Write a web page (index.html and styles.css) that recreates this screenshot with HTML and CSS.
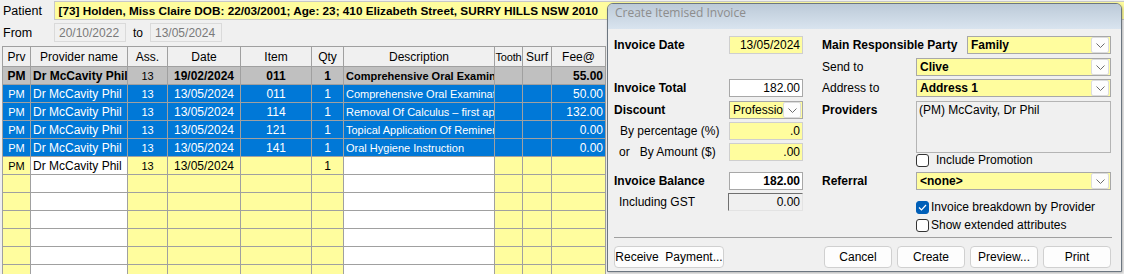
FILE: index.html
```html
<!DOCTYPE html>
<html>
<head>
  <link rel="stylesheet" href="styles.css">
</head>

<body>
  <div class="main">
    <div class="patient-row">
      <span class="lbl">Patient</span>
      <div class="patient-box">[73] Holden, Miss Claire DOB: 22/03/2001; Age: 23; 410 Elizabeth Street, SURRY HILLS NSW 2010</div>
    </div>
    <div class="from-row">
      <span class="lbl">From</span>
      <div class="date-box">20/10/2022</div>
      <span class="to">to</span>
      <div class="date-box">13/05/2024</div>
    </div>

    <!-- Item grid -->
    <table class="grid">
      <colgroup>
        <col style="width:28px"><col style="width:97px"><col style="width:40px"><col style="width:73px"><col style="width:71px">
        <col style="width:32px"><col style="width:151px"><col style="width:28px"><col style="width:29px"><col style="width:54px">
      </colgroup>
      <tr class="head">
        <th>Prv</th><th>Provider name</th><th>Ass.</th><th>Date</th><th>Item</th><th>Qty</th><th>Description</th><th class="tight">Tooth</th><th>Surf</th><th>Fee@</th>
      </tr>
      <tr class="sum">
        <td class="c">PM</td><td>Dr McCavity Phil</td><td class="c sm">13</td><td class="c">19/02/2024</td><td class="c">011</td>
        <td class="c">1</td><td class="sm">Comprehensive Oral Examination</td><td></td><td></td><td class="r">55.00</td>
      </tr>
      <tr class="sel">
        <td class="c sm">PM</td><td>Dr McCavity Phil</td><td class="c sm">13</td><td class="c">13/05/2024</td><td class="c">011</td>
        <td class="c">1</td><td class="sm">Comprehensive Oral Examination</td><td></td><td></td><td class="r">50.00</td>
      </tr>
      <tr class="sel">
        <td class="c sm">PM</td><td>Dr McCavity Phil</td><td class="c sm">13</td><td class="c">13/05/2024</td><td class="c">114</td>
        <td class="c">1</td><td class="sm">Removal Of Calculus – first appointment</td><td></td><td></td><td class="r">132.00</td>
      </tr>
      <tr class="sel">
        <td class="c sm">PM</td><td>Dr McCavity Phil</td><td class="c sm">13</td><td class="c">13/05/2024</td><td class="c">121</td>
        <td class="c">1</td><td class="sm">Topical Application Of Remineralising Agent</td><td></td><td></td><td class="r">0.00</td>
      </tr>
      <tr class="sel">
        <td class="c sm">PM</td><td>Dr McCavity Phil</td><td class="c sm">13</td><td class="c">13/05/2024</td><td class="c">141</td>
        <td class="c">1</td><td class="sm">Oral Hygiene Instruction</td><td></td><td></td><td class="r">0.00</td>
      </tr>
      <tr class="blank">
        <td class="c sm">PM</td><td class="w">Dr McCavity Phil</td><td class="c sm">13</td><td class="c">13/05/2024</td><td></td>
        <td class="c">1</td><td class="w"></td><td></td><td></td><td></td>
      </tr>
      <tr class="blank"><td></td><td class="w"></td><td></td><td></td><td></td><td></td><td class="w"></td><td></td><td></td><td></td></tr>
      <tr class="blank"><td></td><td class="w"></td><td></td><td></td><td></td><td></td><td class="w"></td><td></td><td></td><td></td></tr>
      <tr class="blank"><td></td><td class="w"></td><td></td><td></td><td></td><td></td><td class="w"></td><td></td><td></td><td></td></tr>
      <tr class="blank"><td></td><td class="w"></td><td></td><td></td><td></td><td></td><td class="w"></td><td></td><td></td><td></td></tr>
      <tr class="blank"><td></td><td class="w"></td><td></td><td></td><td></td><td></td><td class="w"></td><td></td><td></td><td></td></tr>
      <tr class="blank"><td></td><td class="w"></td><td></td><td></td><td></td><td></td><td class="w"></td><td></td><td></td><td></td></tr>
    </table>
  </div>

  <!-- Create Itemised Invoice window, floating over the grid -->
  <div class="dialog">
    <div class="title">Create Itemised Invoice</div>
    <div class="dlg-body">
      <div class="form">
        <div class="col-left">
          <span class="b">Invoice Date</span>
          <div class="field yel">13/05/2024</div>
          <span></span><span></span>
          <span class="b">Invoice Total</span>
          <div class="field">182.00</div>
          <span class="b">Discount</span>
          <div class="combo"><span>Professio</span><i class="drop"><svg width="9" height="5" viewBox="0 0 9 5"><polyline points="0.5,0.5 4.5,4.5 8.5,0.5" fill="none" stroke="#6d6d6d"/></svg></i></div>
          <span class="ind">By percentage (%)</span>
          <div class="field yel">.0</div>
          <span class="ind2">or&nbsp;&nbsp; By Amount ($)</span>
          <div class="field yel">.00</div>
          <span class="b">Invoice Balance</span>
          <div class="field b">182.00</div>
          <span class="ind2">Including GST</span>
          <div class="field sunk">0.00</div>
        </div>

        <div class="col-right">
          <div class="span-row">
            <span class="b">Main Responsible Party</span>
            <div class="combo mrp"><span class="b">Family</span><i class="drop"><svg width="9" height="5" viewBox="0 0 9 5"><polyline points="0.5,0.5 4.5,4.5 8.5,0.5" fill="none" stroke="#6d6d6d"/></svg></i></div>
          </div>
          <span>Send to</span>
          <div class="combo"><span class="b">Clive</span><i class="drop"><svg width="9" height="5" viewBox="0 0 9 5"><polyline points="0.5,0.5 4.5,4.5 8.5,0.5" fill="none" stroke="#6d6d6d"/></svg></i></div>
          <span>Address to</span>
          <div class="combo"><span class="b">Address 1</span><i class="drop"><svg width="9" height="5" viewBox="0 0 9 5"><polyline points="0.5,0.5 4.5,4.5 8.5,0.5" fill="none" stroke="#6d6d6d"/></svg></i></div>
          <span class="b">Providers</span>
          <div class="listbox">(PM) McCavity, Dr Phil</div>
          <span></span>
          <label class="check promo"><i class="box"></i>Include Promotion</label>
          <span class="b">Referral</span>
          <div class="combo"><span class="b">&lt;none&gt;</span><i class="drop"><svg width="9" height="5" viewBox="0 0 9 5"><polyline points="0.5,0.5 4.5,4.5 8.5,0.5" fill="none" stroke="#6d6d6d"/></svg></i></div>
          <span></span>
          <label class="check"><i class="box on"><svg width="9" height="7" viewBox="0 0 9 7"><polyline points="1,3.5 3.5,6 8,1" fill="none" stroke="#fff" stroke-width="1.2"/></svg></i>Invoice breakdown by Provider</label>
          <span></span>
          <label class="check"><i class="box"></i>Show extended attributes</label>
        </div>
      </div>

      <div class="sep"></div>

      <div class="buttons">
        <button class="btn wide">Receive&nbsp; Payment...</button>
        <span class="spacer"></span>
        <button class="btn">Cancel</button>
        <button class="btn">Create</button>
        <button class="btn">Preview...</button>
        <button class="btn">Print</button>
      </div>
    </div>
  </div>
</body>
</html>
```

FILE: styles.css
```css
body {
  margin: 0;
  width: 1124px;
  height: 274px;
  overflow: hidden;
  background-color: #f0f0f0;
  font: 12px "Liberation Sans", Arial, sans-serif;
  color: #000;
}

/* Main window */
.main {
  padding: 1px 0 0 2px;
}

.patient-row, .from-row {
  display: flex;
  align-items: center;
}

.patient-row {
  height: 19px;
}

.from-row {
  height: 19px;
  margin-top: 3px;
}

.lbl {
  width: 51px;
  margin-left: 1px;
  font-size: 12.5px;
}

.patient-box {
  box-sizing: border-box;
  height: 19px;
  width: 1080px;
  padding: 2px 4px;
  background-color: #fffd9e;
  border: 1px solid #c8c8c8;
  border-right: none;
  font-weight: bold;
  font-size: 11.75px;
  white-space: nowrap;
}

.date-box {
  box-sizing: border-box;
  width: 72px;
  height: 19px;
  padding: 2px 4px;
  border: 1px solid #dadada;
  color: #7a7a7a;
}

.to {
  margin: 0 7px 0 7px;
}

/* Grid */
.grid {
  margin-top: 4px;
  border-collapse: collapse;
  table-layout: fixed;
  width: 603px;
  font-size: 12px;
}

.grid th, .grid td {
  border: 1px solid #a0a0a0;
  height: 17px;
  padding: 0 2px;
  white-space: nowrap;
  overflow: hidden;
  background-color: #fffd9e;
}

.grid th {
  height: 19px;
  padding: 0;
  font-weight: normal;
  background-color: #f0f0f0;
}

.grid th.tight {
  font-size: 11px;
  letter-spacing: -0.2px;
}

.grid .c { text-align: center; }
.grid .r { text-align: right; }
.grid .sm { font-size: 11px; }

.grid .sum td {
  background-color: #c0c0c0;
  font-weight: bold;
}

.grid .sum td.c.sm { font-weight: normal; }

.grid .sel td {
  background-color: #0078d7;
  color: #fff;
}

.grid td.w { background-color: #fff; }

/* Floating dialog */
.dialog {
  position: absolute;
  left: 607px;
  top: 3px;
  width: 513px;
  height: 267px;
  border: 1px solid #6c7680;
  border-radius: 6px 6px 0 0;
  background-color: #f0f0f0;
  box-shadow: 1px 1px 3px rgba(0, 0, 0, 0.25);
  overflow: hidden;
}

.title {
  height: 25px;
  line-height: 26px;
  padding-left: 7px;
  background: linear-gradient(#bccad8, #d9e4ef);
  color: #8d8d8d;
  font: 12px "Open Sans", "Liberation Sans", sans-serif;
}

.dlg-body {
  padding: 7px 9px 0 6px;
}

.form {
  display: flex;
  gap: 19px;
}

.col-left, .col-right {
  display: grid;
  align-items: start;
}

.col-left {
  grid-template-columns: 115px 74px;
  grid-template-rows: 22px 21px 22px 21px 21px 29px 21px 18px;
}

.col-right {
  grid-template-columns: 94px 195px;
  grid-template-rows: 22px 21px 22px 52px 19px 28px 18px 18px;
}

.col-left > span, .col-right > span {
  line-height: 18px;
  white-space: nowrap;
}

.b { font-weight: bold; }
.ind { padding-left: 6px; }
.ind2 { padding-left: 5px; }

.span-row {
  grid-column: 1 / 3;
  display: flex;
  justify-content: space-between;
  line-height: 18px;
}

.field, .combo, .listbox {
  box-sizing: border-box;
  height: 18px;
  border: 1px solid #a8a8a8;
  background-color: #fff;
}

.field {
  padding: 1px 2px 0 0;
  text-align: right;
  line-height: 15px;
}

.field.yel {
  background-color: #fffd9e;
  border-color: #cfcfcf;
}

.field.sunk {
  margin-left: -1px;
  background-color: #f0f0f0;
  border-color: #707070 #e3e3e3 #e3e3e3 #707070;
}

.combo {
  display: flex;
  align-items: center;
  padding-left: 3px;
  background-color: #fffd9e;
}

.combo > span {
  flex: 1;
  overflow: hidden;
  white-space: nowrap;
}

.combo.mrp {
  width: 144px;
}

.drop {
  display: flex;
  align-items: center;
  justify-content: center;
  width: 16px;
  height: 14px;
  margin-right: 1px;
  background-color: #fdfdfd;
  border: 1px solid #dcdcdc;
  border-radius: 2px;
}

.listbox {
  height: 52px;
  padding: 1px 2px;
  background-color: #f0f0f0;
  border-color: #b4b4b4;
}

.check {
  grid-column: 2;
  display: flex;
  align-items: center;
  height: 14px;
  white-space: nowrap;
}

.box {
  box-sizing: border-box;
  width: 13px;
  height: 13px;
  margin-right: 2px;
  border: 1px solid #333;
  border-radius: 3px;
  background-color: #fff;
  display: flex;
  align-items: center;
  justify-content: center;
}

.promo .box { margin-right: 7px; }

.box.on {
  border-color: #005fb8;
  background-color: #005fb8;
}

.sep {
  height: 1px;
  margin-top: 1px;
  width: 498px;
  background-color: #a0a0a0;
}

.buttons {
  display: flex;
  gap: 5px;
  margin-top: 8px;
  width: 497px;
}

.spacer { flex: 1; }

.btn {
  box-sizing: border-box;
  width: 68px;
  height: 22px;
  padding: 0;
  background-color: #fdfdfd;
  border: 1px solid #d0d0d0;
  border-radius: 4px;
  font: 12px "Liberation Sans", Arial, sans-serif;
  color: #000;
}

.btn.wide { width: 110px; }
```
